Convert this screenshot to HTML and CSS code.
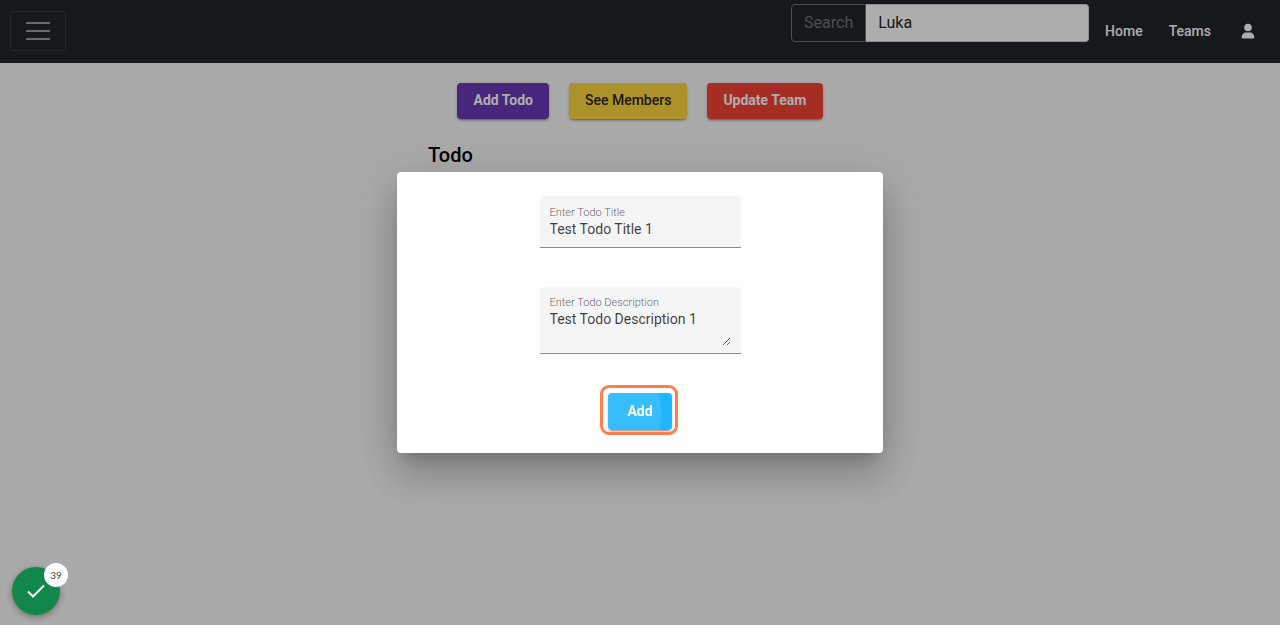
FILE: index.html
```html
<!DOCTYPE html>
<html lang="en">
<head>
<meta charset="utf-8">
<meta name="viewport" content="width=device-width, initial-scale=1">
<title>Todo</title>
<link rel="stylesheet" href="styles.css">
</head>
<body>
<header class="navbar">
  <button class="toggler" type="button" aria-label="Toggle navigation">
    <svg width="30" height="30" viewBox="0 0 30 30"><path d="M3 7h24M3 15h24M3 23h24" stroke="rgba(255,255,255,.55)" stroke-width="2" stroke-miterlimit="10"/></svg>
  </button>
  <form class="search">
    <label class="search-label" for="search">Search</label>
    <input class="search-input" id="search" type="text" value="Luka">
  </form>
  <nav class="links">
    <a href="#">Home</a>
    <a href="#">Teams</a>
    <a href="#" aria-label="Profile"><svg class="user" width="14" height="16" viewBox="0 0 14 16" fill="currentColor"><circle cx="7" cy="4.500" r="3.800"/><path d="M1.500 15.500Q.7 15.500 .7 14.500C.7 11.500 2.500 9.500 5 9.500h4c2.500 0 4.300 2 4.300 5q0 1-.8 1z"/></svg></a>
  </nav>
</header>
<main class="content">
  <div class="actions">
    <button class="btn purple" type="button">Add Todo</button>
    <button class="btn yellow" type="button">See Members</button>
    <button class="btn red" type="button">Update Team</button>
  </div>
  <section class="list"><h2>Todo</h2></section>
</main>
<div class="backdrop">
  <form class="dialog" role="dialog" aria-label="Add todo">
    <div class="field">
      <label for="title">Enter Todo Title</label>
      <input id="title" type="text" value="Test Todo Title 1">
    </div>
    <div class="field area">
      <label for="desc">Enter Todo Description</label>
      <textarea id="desc">Test Todo Description 1</textarea>
    </div>
    <div class="submit"><button class="btn blue" type="button">Add</button></div>
  </form>
</div>
<button class="status" type="button" aria-label="39 steps complete">
  <svg width="24" height="24" viewBox="0 0 24 24" fill="none" stroke="#fff" stroke-width="2"><path d="M4 12.500l5 5L20 6.500"/></svg>
  <span class="count">39</span>
</button>
</body>
</html>
```
FILE: styles.css
```css
* { box-sizing: border-box; }
body {
  margin: 0;
  min-height: 100vh;
  background: #fafafa;
  font-family: Roboto, "Liberation Sans", sans-serif;
  font-size: 14px;
}
button, input, textarea { font: inherit; }
.navbar {
  display: flex;
  align-items: flex-start;
  min-height: 63px;
  padding: 4px 25px 4px 10px;
  background: #212529;
}
.toggler {
  display: grid;
  place-items: center;
  width: 56px;
  height: 40px;
  margin: 7px auto 0 0;
  padding: 0;
  background: transparent;
  border: 1px solid rgba(255, 255, 255, .1);
  border-radius: 4px;
}
.search {
  display: flex;
  width: 298px;
  height: 38px;
  font-size: 16px;
}
.search-label {
  padding: 6px 12px;
  line-height: 24px;
  color: #6c757d;
  border: 1px solid #6c757d;
  border-radius: 4px 0 0 4px;
}
.search-input {
  flex: 1;
  min-width: 0;
  padding: 5px 12px 7px;
  color: #212529;
  background: #fff;
  border: 1px solid #ced4da;
  border-left: 0;
  border-radius: 0 4px 4px 0;
}
.links {
  display: flex;
  align-items: center;
  gap: 26px;
  height: 53px;
  padding-left: 16px;
}
.links a {
  color: #fff;
  font-weight: 500;
  text-decoration: none;
}
.user { display: block; margin-left: 4px; }
.content { padding: 20px 16px; }
.actions {
  display: flex;
  justify-content: center;
  gap: 20px;
}
.btn {
  height: 36px;
  padding: 0 16px 2px;
  font-weight: 500;
  color: #fff;
  border: 0;
  border-radius: 4px;
  box-shadow: 0 3px 1px -2px rgba(0, 0, 0, .2), 0 2px 2px rgba(0, 0, 0, .14), 0 1px 5px rgba(0, 0, 0, .12);
}
.purple { background: #673ab7; font-weight: 700; }
.yellow { background: #ffd740; color: rgba(0, 0, 0, .87); }
.red { background: #f44336; font-weight: 700; }
.blue {
  position: relative;
  min-width: 64px;
  height: 37px;
  font-weight: 700;
  background: radial-gradient(circle at 0 20px, #38bdfb 53px, #1eb6fc 54px);
}
.blue::after {
  content: "";
  position: absolute;
  inset: -8px -6px -5px -8px;
  border: 3px solid #ff7c4d;
  border-radius: 9px;
}
.list {
  max-width: 424px;
  margin: 24px auto 0;
}
.list h2 {
  margin: 0;
  font-size: 20px;
  line-height: 24px;
  font-weight: 500;
  color: #000;
}
.backdrop {
  position: fixed;
  inset: 0;
  display: grid;
  place-items: center;
  background: rgba(0, 0, 0, .32);
}
.dialog {
  display: flex;
  flex-direction: column;
  align-items: center;
  width: 486px;
  max-width: 80vw;
  padding: 24px 24px 23px;
  background: #fff;
  border-radius: 4px;
  box-shadow: 0 11px 15px -7px rgba(0, 0, 0, .2), 0 24px 38px 3px rgba(0, 0, 0, .14), 0 9px 46px 8px rgba(0, 0, 0, .12);
}
.field {
  display: flex;
  flex-direction: column;
  width: 201px;
  padding: 10px 10px 9px;
  background: #f5f5f5;
  border-bottom: 1px solid #8c8c8c;
  border-radius: 4px 4px 0 0;
}
.field label {
  font-size: 11px;
  line-height: 14px;
  font-weight: 300;
  color: rgba(0, 0, 0, .65);
}
.field input, .field textarea {
  width: 100%;
  padding: 0;
  line-height: 18px;
  color: rgba(0, 0, 0, .76);
  background: transparent;
  border: 0;
}
.field input { height: 18px; }
.field textarea {
  display: block;
  height: 36px;
  resize: vertical;
  overflow: auto;
}
.area {
  margin: 39px 0;
  padding: 9px 10px 7px;
}
.status {
  position: fixed;
  left: 12px;
  bottom: 10px;
  display: grid;
  place-items: center;
  width: 48px;
  height: 48px;
  padding: 0;
  background: #12874b;
  border: 0;
  border-radius: 50%;
  box-shadow: 0 2px 6px rgba(0, 0, 0, .35);
}
.count {
  position: absolute;
  top: -4px;
  right: -8px;
  width: 24px;
  height: 24px;
  font-family: Lato, sans-serif;
  font-size: 10px;
  line-height: 24px;
  color: #444;
  background: #fff;
  border-radius: 50%;
}
```
